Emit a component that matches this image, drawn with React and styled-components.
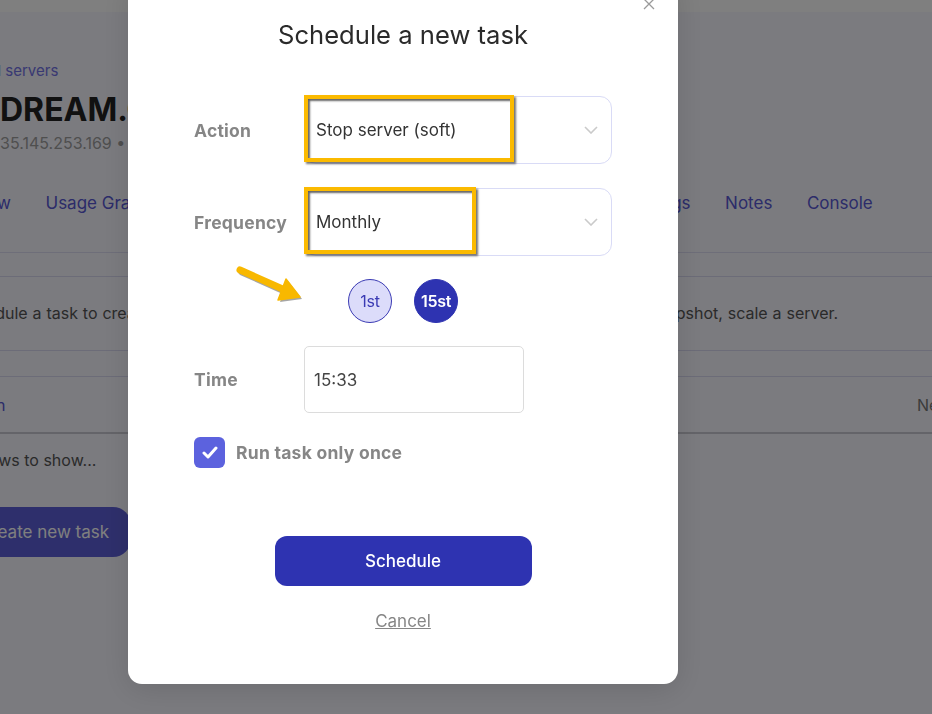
import React from 'react';
import styled, { createGlobalStyle } from 'styled-components';

const GlobalStyle = createGlobalStyle`
  html, body { margin: 0; padding: 0; height: 100%; overflow: hidden; }
  body { font-family: Inter, "Liberation Sans", sans-serif; background: #f6f6fe; }
  * { box-sizing: border-box; }
`;

// ---------- page behind the dialog ----------
const Page = styled.div`
  width: 1120px;
  margin-left: -60px;
  min-height: 714px;
  background: #f6f6fe;
`;
const TopBar = styled.div`
  height: 12px;
  background: #ffffff;
`;
const Main = styled.div`
  padding-top: 49px;
`;
const Crumb = styled.a`
  display: block;
  font-size: 15px;
  line-height: 20px;
  color: #7272e6;
  text-decoration: none;
`;
const ServerHead = styled.div`
  display: flex;
  gap: 16px;
  margin-top: 9px;
`;
const ServerIcon = styled.div`
  width: 44px;
  height: 44px;
  margin-top: 4px;
  border-radius: 10px;
  background: #e2e2fa;
`;
const ServerTitle = styled.h1`
  margin: 0;
  font-size: 32px;
  line-height: 40px;
  font-weight: 700;
  color: #222;
`;
const ServerMeta = styled.div`
  margin-top: 2px;
  font-size: 16px;
  line-height: 22px;
  color: #9e9e9e;
`;
const TabBar = styled.nav`
  display: flex;
  gap: 34.5px;
  margin-top: 20px;
  margin-left: -5px;
  border-bottom: 1px solid #dcdcf2;
`;
const Tab = styled.a`
  padding: 18px 0 38px;
  font-size: 17px;
  line-height: 22px;
  color: #5858d4;
  white-space: nowrap;
`;
const Card = styled.section`
  margin-top: ${p => p.$gap}px;
  border-top: 1px solid #d8d8f0;
  border-bottom: ${p => (p.$closed ? '1px solid #d8d8f0' : 'none')};
  padding: ${p => (p.$closed ? '24px 17px 25px' : '0 17px')};
`;
const Description = styled.p`
  margin: 0;
  font-size: 16px;
  line-height: 24px;
  word-spacing: 0.4px;
  color: #555;
  white-space: nowrap;
`;
const TableHead = styled.div`
  display: grid;
  grid-template-columns: repeat(3, 320px) 1fr;
  padding: 17px 0 16px;
  border-bottom: 2px solid #c9c9d2;
  font-size: 16px;
  line-height: 22px;
`;
const HeadCell = styled.div`
  color: ${p => (p.$active ? '#5858d4' : '#777')};
  white-space: nowrap;
`;
const EmptyRow = styled.div`
  padding: 15px 0 0;
  font-size: 16px;
  line-height: 22px;
  color: #555;
`;
const CreateButton = styled.button`
  margin-top: 36px;
  height: 50px;
  padding: 0 22px;
  border: none;
  border-radius: 18px;
  background: #5d5fd8;
  color: #fff;
  font: inherit;
  font-size: 17px;
`;

// ---------- dialog ----------
const Overlay = styled.div`
  position: fixed;
  inset: 0;
  background: rgba(0, 0, 0, 0.5);
  padding-left: 128px;
`;
const Modal = styled.div`
  position: relative;
  width: 550px;
  margin-top: -24px;
  padding: 40px 66px 53px;
  background: #fff;
  border-radius: 14px;
  box-shadow: 0 6px 30px rgba(0, 0, 0, 0.12);
`;
const CloseButton = styled.button`
  position: absolute;
  top: 21px;
  right: 22px;
  width: 14px;
  height: 14px;
  padding: 0;
  border: none;
  background: none;
  display: flex;
`;
const Title = styled.h2`
  margin: 0;
  font-size: 25.6px;
  line-height: 38px;
  font-weight: 400;
  text-align: center;
  color: #2a2a2a;
`;
const Row = styled.div`
  display: grid;
  grid-template-columns: 110px 1fr;
  align-items: center;
  margin-top: ${p => p.$gap}px;
`;
const Label = styled.label`
  font-size: 17.5px;
  font-weight: 700;
  color: #868686;
  letter-spacing: 0.25px;
  white-space: nowrap;
`;
const Select = styled.div`
  position: relative;
  height: 68px;
  padding: 0 13px 0 11px;
  display: flex;
  align-items: center;
  justify-content: space-between;
  border: 1px solid #d9dbf6;
  border-radius: 12px;
  font-size: 17px;
  color: #333;
`;
const Highlight = styled.div`
  position: absolute;
  top: -2px;
  left: -1px;
  width: ${p => p.$width}px;
  height: 67px;
  border: 4px solid #fbba00;
  box-shadow: 2px 2px 2px rgba(0, 0, 0, 0.55), inset 2px 2px 2px rgba(0, 0, 0, 0.6);
  pointer-events: none;
`;
const DayRow = styled.div`
  display: flex;
  justify-content: center;
  gap: 22px;
  margin-top: 23px;
`;
const DayButton = styled.button`
  width: 44px;
  height: 44px;
  padding: 0;
  border-radius: 50%;
  border: 1px solid ${p => (p.$selected ? '#2e33b1' : '#3b3bb4')};
  background: ${p => (p.$selected ? '#2e33b1' : '#dcdcfa')};
  color: ${p => (p.$selected ? '#fff' : '#3b3bb4')};
  font: inherit;
  font-size: 16px;
  font-weight: ${p => (p.$selected ? 600 : 400)};
  letter-spacing: -0.3px;
`;
const TimeInput = styled.div`
  width: 220px;
  height: 67px;
  padding: 0 9px;
  display: flex;
  align-items: center;
  border: 1px solid #dcdcdc;
  border-radius: 5px;
  font-size: 17px;
  color: #444;
`;
const CheckRow = styled.div`
  display: flex;
  align-items: center;
  gap: 11px;
  margin-top: 24px;
`;
const CheckBox = styled.span`
  width: 31px;
  height: 31px;
  border-radius: 6px;
  background: #5c62de;
  display: flex;
  align-items: center;
  justify-content: center;
`;
const Actions = styled.div`
  display: flex;
  flex-direction: column;
  align-items: center;
  margin-top: 68px;
`;
const ScheduleButton = styled.button`
  width: 257px;
  height: 50px;
  border: none;
  border-radius: 12px;
  background: #2e33b1;
  color: #fff;
  font: inherit;
  font-size: 17px;
  font-weight: 500;
`;
const CancelLink = styled.a`
  margin-top: 25px;
  font-size: 17px;
  line-height: 20px;
  color: #868686;
  text-decoration: underline;
`;
const Arrow = styled.svg`
  position: absolute;
  left: 102px;
  top: 282px;
`;

const Chevron = () => (
  <svg width="14" height="8" viewBox="0 0 14 8">
    <polyline points="1,1 7,7 13,1" fill="none" stroke="#cacaca" strokeWidth="1.6" />
  </svg>
);

const tabs = ['Overview', 'Usage Graphs', 'Networking', 'Snapshots', 'Backups', 'Tasks', 'Settings', 'Notes', 'Console'];

export default function App() {
  return (
    <>
      <GlobalStyle />
      <Page>
        <TopBar />
        <Main>
          <Crumb>All cloud servers</Crumb>
          <ServerHead>
            <ServerIcon />
            <div>
              <ServerTitle>DREAM.CLOUD</ServerTitle>
              <ServerMeta>35.145.253.169 • Frankfurt</ServerMeta>
            </div>
          </ServerHead>
          <TabBar>
            {tabs.map(t => <Tab key={t}>{t}</Tab>)}
          </TabBar>
          <Card $gap={23} $closed>
            <Description>
              Schedule a task to create a backup, start or stop a server, reboot or resize a server, take a snapshot, scale a server.
            </Description>
          </Card>
          <Card $gap={25}>
            <TableHead>
              <HeadCell $active>Action</HeadCell>
              <HeadCell>Frequency</HeadCell>
              <HeadCell>Time</HeadCell>
              <HeadCell>Next run</HeadCell>
            </TableHead>
            <EmptyRow>No rows to show...</EmptyRow>
            <CreateButton>Create new task</CreateButton>
          </Card>
        </Main>
      </Page>

      <Overlay>
        <Modal>
          <CloseButton>
            <svg width="14" height="14" viewBox="0 0 14 14">
              <path d="M2 2 L12 12 M12 2 L2 12" stroke="#9a9a9a" strokeWidth="1.3" />
            </svg>
          </CloseButton>
          <Title>Schedule a new task</Title>

          <Row $gap={42}>
            <Label>Action</Label>
            <Select>
              Stop server (soft)
              <Chevron />
              <Highlight $width={210} />
            </Select>
          </Row>
          <Row $gap={24}>
            <Label>Frequency</Label>
            <Select>
              Monthly
              <Chevron />
              <Highlight $width={172} />
            </Select>
          </Row>

          <DayRow>
            <DayButton>1st</DayButton>
            <DayButton $selected>15st</DayButton>
          </DayRow>

          <Row $gap={23}>
            <Label>Time</Label>
            <TimeInput>15:33</TimeInput>
          </Row>

          <CheckRow>
            <CheckBox>
              <svg width="16" height="13" viewBox="0 0 16 13">
                <polyline points="2,7 6,11 14,2" fill="none" stroke="#fff" strokeWidth="3" strokeLinecap="round" strokeLinejoin="round" />
              </svg>
            </CheckBox>
            <Label>Run task only once</Label>
          </CheckRow>

          <Actions>
            <ScheduleButton>Schedule</ScheduleButton>
            <CancelLink>Cancel</CancelLink>
          </Actions>

          <Arrow width="80" height="50" viewBox="0 0 80 50">
            <g transform="translate(2,2)" opacity="0.35">
              <line x1="10" y1="12" x2="57" y2="33" stroke="#000" strokeWidth="7" strokeLinecap="round" />
              <polygon points="70,39 56,21 48,42" fill="#000" />
            </g>
            <line x1="10" y1="12" x2="57" y2="33" stroke="#f8b800" strokeWidth="7" strokeLinecap="round" />
            <polygon points="70,39 56,21 48,42" fill="#f8b800" stroke="#f8b800" strokeWidth="1.5" strokeLinejoin="round" />
          </Arrow>
        </Modal>
      </Overlay>
    </>
  );
}
